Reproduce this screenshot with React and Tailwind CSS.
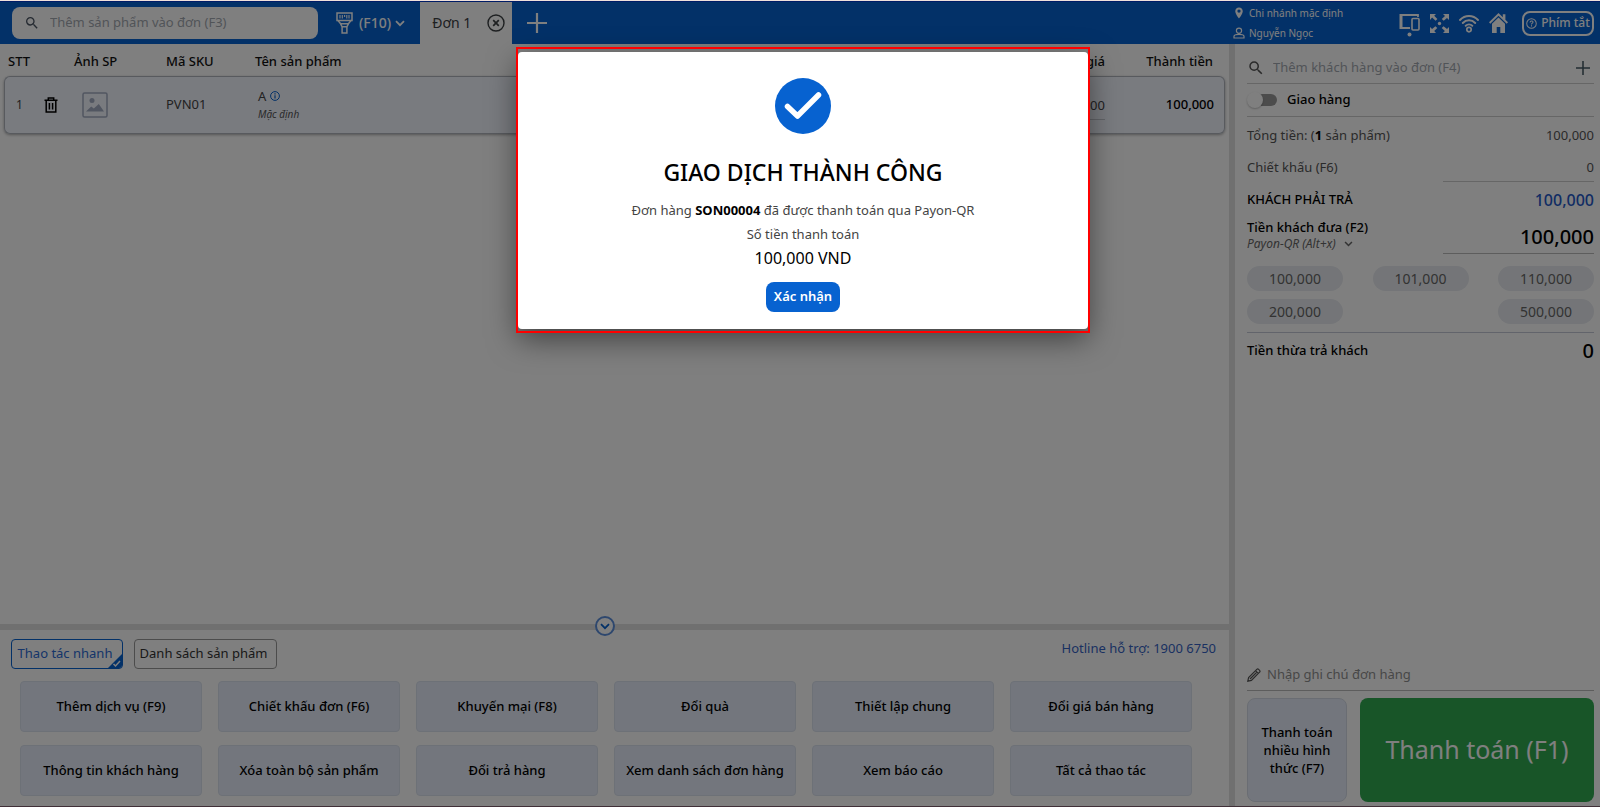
import React from "react";

const quickActions = [
  "Thêm dịch vụ (F9)",
  "Chiết khấu đơn (F6)",
  "Khuyến mại (F8)",
  "Đổi quà",
  "Thiết lập chung",
  "Đổi giá bán hàng",
  "Thông tin khách hàng",
  "Xóa toàn bộ sản phẩm",
  "Đổi trả hàng",
  "Xem danh sách đơn hàng",
  "Xem báo cáo",
  "Tất cả thao tác",
];

const suggestions = ["100,000", "101,000", "110,000", "200,000", null, "500,000"];

function SearchIcon({ className }) {
  return (
    <svg viewBox="0 0 24 24" className={className} fill="currentColor" aria-hidden="true">
      <path d="M15.5 14h-.79l-.28-.27A6.47 6.47 0 0 0 16 9.5 6.5 6.5 0 1 0 9.5 16c1.61 0 3.09-.59 4.23-1.57l.27.28v.79l5 4.99L20.49 19l-4.99-5zm-6 0C7.01 14 5 11.99 5 9.5S7.01 5 9.5 5 14 7.01 14 9.5 11.99 14 9.5 14z" />
    </svg>
  );
}

function ScannerIcon() {
  return (
    <svg viewBox="0 0 17 22" className="h-[22px] w-[17px]" fill="none" stroke="currentColor" strokeWidth="1.5" aria-hidden="true">
      <path d="M1 1h15v7.5H1z" />
      <path d="M4 3v3.5M6.3 3v3.5M8.6 3v2M10.8 3v3.5M13 3v3.5" strokeWidth="1.1" />
      <path d="M2 8.5l2.6 3.3h7.8L15 8.5M4.6 11.8l1.5 3h4.8l1.5-3M6.1 14.8V21h4.8v-6.2" />
    </svg>
  );
}

function ChevronDown({ className }) {
  return (
    <svg viewBox="0 0 10 7" className={className} fill="none" stroke="currentColor" strokeWidth="1.8" aria-hidden="true">
      <path d="M1 1.2l4 4 4-4" />
    </svg>
  );
}

function PlusIcon({ className }) {
  return (
    <svg viewBox="0 0 20 20" className={className} fill="none" stroke="currentColor" strokeWidth="2.2" aria-hidden="true">
      <path d="M10 0v20M0 10h20" />
    </svg>
  );
}

function Header() {
  return (
    <header className="flex h-[42px] shrink-0 items-center bg-[#0762d0] text-white">
      <label className="ml-3 flex h-8 w-[306px] items-center rounded-lg bg-white pl-3">
        <SearchIcon className="size-4 text-[#4b5563]" />
        <input
          aria-label="Thêm sản phẩm vào đơn (F3)"
          placeholder="Thêm sản phẩm vào đơn (F3)"
          className="ml-2.5 w-60 bg-transparent text-[13px] outline-none placeholder:text-[#a3a8b0]"
        />
      </label>
      <button type="button" className="ml-[18px] flex items-center text-sm">
        <ScannerIcon />
        <span className="mr-1 ml-1.5 font-medium">(F10)</span>
        <ChevronDown className="h-[7px] w-2.5" />
      </button>
      <div className="ml-[15px] flex h-full w-[92px] items-center justify-between bg-white pr-[7px] pl-3 text-[#3c4043]">
        <span className="text-sm whitespace-nowrap">Đơn 1</span>
        <button type="button" aria-label="Đóng đơn">
          <svg viewBox="0 0 18 18" className="size-[18px]" fill="none" stroke="currentColor" strokeWidth="1.4" aria-hidden="true">
            <circle cx="9" cy="9" r="8" />
            <path d="M6.2 6.2l5.6 5.6M11.8 6.2l-5.6 5.6" strokeWidth="1.7" />
          </svg>
        </button>
      </div>
      <button type="button" aria-label="Thêm đơn" className="ml-[15px]">
        <PlusIcon className="size-5" />
      </button>

      <div className="ml-auto flex w-[367px] items-center pr-1.5">
        <div className="flex flex-col gap-1 text-[10px] leading-4">
          <div className="flex items-center gap-1">
            <svg viewBox="0 0 24 24" className="size-3" fill="currentColor" aria-hidden="true">
              <path d="M12 1C7.6 1 4.5 4.3 4.5 8.4 4.5 14 12 23 12 23s7.5-9 7.5-14.6C19.5 4.3 16.4 1 12 1zm0 10.5a3.3 3.3 0 1 1 0-6.6 3.3 3.3 0 0 1 0 6.6z" />
            </svg>
            Chi nhánh mặc định
          </div>
          <div className="flex items-center gap-1">
            <svg viewBox="0 0 12 12" className="size-3" fill="none" stroke="currentColor" strokeWidth="1.2" aria-hidden="true">
              <circle cx="6" cy="3.7" r="2.6" />
              <path d="M1 11V9.3C1 8 3 7.4 6 7.4S11 8 11 9.3V11z" />
            </svg>
            Nguyễn Ngọc
          </div>
        </div>
        <div className="ml-auto flex items-center gap-[10px]">
          <svg viewBox="0 0 21 24" className="mt-1 h-6 w-[21px]" fill="none" stroke="currentColor" aria-hidden="true">
            <path d="M19 4V2H2v13h9" strokeWidth="1.8" />
            <path d="M2 1v15" strokeWidth="3" />
            <rect x="13" y="5.5" width="7" height="11.5" rx="1" strokeWidth="1.6" />
            <circle cx="10.5" cy="21.5" r="2" fill="currentColor" stroke="none" />
          </svg>
          <svg viewBox="0 0 19 19" className="size-[19px]" fill="currentColor" aria-hidden="true">
            <path d="M0 0h6L4.2 1.8l3.2 3.1-1.8 1.8-3.5-3.1L0 6zM19 0v6l-2-2.1-3.3 2.9-1.9-1.8 3.2-3.1L13 0zM0 19v-6l2.1 2.1 3.3-2.9 1.9 1.8-3.1 3.1L6 19zM19 19h-6l1.9-1.9-3.2-3.1 1.9-1.8 3.4 2.9L19 13z" />
            <circle cx="9.5" cy="9.5" r="1.7" />
          </svg>
          <svg viewBox="0 0 20 19" className="h-[19px] w-5" fill="none" stroke="currentColor" strokeWidth="1.9" strokeLinecap="round" aria-hidden="true">
            <path d="M1 6c4.9-5.3 13.1-5.3 18 0M3.800 9c3.400-3.600 9-3.600 12.400 0M6.700 11.800c1.900-1.800 4.700-1.800 6.600 0" />
            <circle cx="10" cy="15.6" r="2.2" strokeWidth="1.7" />
          </svg>
          <svg viewBox="0 0 19 20" className="h-5 w-[19px]" fill="currentColor" aria-hidden="true">
            <path d="M9.5 0L0 9.3l1.3 1.4 8.2-7.9 8.2 7.9L19 9.3l-2.6-2.6V1.2h-2.6v3z" />
            <path d="M9.5 4.5L3 10.8V20h4.7v-6h3.6v6H16v-9.2z" />
          </svg>
          <button type="button" className="ml-1 flex h-[25px] w-[72px] items-center justify-center gap-1 rounded-lg border-2 border-white text-xs font-medium whitespace-nowrap">
            <svg viewBox="0 0 12 12" className="size-[11px] shrink-0" fill="none" stroke="currentColor" strokeWidth="1.1" aria-hidden="true">
              <circle cx="6" cy="6" r="5.2" />
              <path d="M4.4 4.8c0-2.2 3.2-2.1 3.2-.2C7.6 5.7 6 5.7 6 7M6 8v1.2" />
            </svg>
            Phím tắt
          </button>
        </div>
      </div>
    </header>
  );
}

function OrderTable() {
  return (
    <div className="min-h-0 grow px-1">
      <table className="w-full table-fixed border-separate border-spacing-0 text-[13px]">
        <thead>
          <tr className="h-8 text-left text-[#111]">
            <th className="w-10 pt-1 pl-1 font-medium">STT</th>
            <td className="w-[30px]" />
            <th className="w-[92px] pt-1 font-medium">Ảnh SP</th>
            <th className="w-[89px] pt-1 font-medium">Mã SKU</th>
            <th className="pt-1 font-medium">Tên sản phẩm</th>
            <th className="w-[110px] pt-1 text-right font-medium">Đơn giá</th>
            <th className="w-[120px] pt-1 pr-3 text-right font-medium">Thành tiền</th>
          </tr>
        </thead>
        <tbody>
          <tr className="h-[58px] rounded-md bg-[#f3f6ff] text-[#444] shadow-[0_1px_3px_rgba(0,0,0,0.35)]">
            <td className="rounded-l-md border-y border-l border-[#b0b5bd] pl-[11px] text-xs">1</td>
            <td className="border-y border-[#b0b5bd]">
              <button type="button" aria-label="Xóa sản phẩm" className="block text-black">
                <svg viewBox="0 0 14 16" className="h-4 w-3.5" fill="none" stroke="currentColor" strokeWidth="1.5" aria-hidden="true">
                  <path d="M.5 3.3h13M4.3 3V1h5.4v2M2.2 3.500V15h9.600V3.500M5.400 6v6.500M8.600 6v6.500" />
                </svg>
              </button>
            </td>
            <td className="border-y border-[#b0b5bd] pl-2">
              <svg viewBox="0 0 26 26" className="size-[26px]" fill="none" aria-hidden="true">
                <rect x="1" y="1" width="24" height="24" rx="1.5" stroke="#a3adc2" strokeWidth="1.5" />
                <circle cx="10" cy="8.5" r="2.5" fill="#a3adc2" />
                <path d="M4 19.5l5.2-5 2.6 2 5-4.5 5.200 7.500z" fill="#a3adc2" />
              </svg>
            </td>
            <td className="border-y border-[#b0b5bd]">PVN01</td>
            <td className="border-y border-[#b0b5bd] pl-[3px]">
              <div className="flex items-center gap-1 leading-[18px]">
                A
                <svg viewBox="0 0 10 10" className="size-2.5" fill="none" stroke="#0762d0" strokeWidth="1" aria-hidden="true">
                  <circle cx="5" cy="5" r="4.4" />
                  <path d="M5 4.3v3.2M5 2.3v1.1" strokeWidth="1.2" />
                </svg>
              </div>
              <div className="text-[10px] leading-[18px] text-[#555] italic">Mặc định</div>
            </td>
            <td className="border-y border-[#b0b5bd] text-right">
              <span className="inline-block border-b border-[#c4c8d0] pl-8 leading-7">100,000</span>
            </td>
            <td className="rounded-r-md border-y border-r border-[#b0b5bd] pr-2.5 text-right font-medium text-black">100,000</td>
          </tr>
        </tbody>
      </table>
    </div>
  );
}

function QuickPanel() {
  return (
    <section className="relative shrink-0 border-t-[6px] border-[#e0e0e0] pb-2.5">
      <button
        type="button"
        aria-label="Thu gọn"
        className="absolute -top-[14px] left-[49.2%] flex size-5 -translate-x-1/2 items-center justify-center rounded-full border-2 border-[#5c8fdc] bg-white text-[#0762d0]"
      >
        <ChevronDown className="h-[7px] w-2.5" />
      </button>
      <div className="flex items-start pt-[9px] pr-[13px] pl-[11px] text-[13px]">
        <button type="button" className="relative h-[30px] w-28 overflow-hidden rounded border border-[#0762d0] pr-1 text-[#2c6bd4]">
          Thao tác nhanh
          <svg viewBox="0 0 14 14" className="absolute right-0 bottom-0 size-3.5" aria-hidden="true">
            <path d="M14 0v14H0z" fill="#0762d0" />
            <path d="M5.5 10l2 2 4.5-5" fill="none" stroke="#fff" strokeWidth="1.5" />
          </svg>
        </button>
        <button type="button" className="ml-[11px] h-[30px] w-[143px] rounded border border-[#999] pr-1 text-[#333]">
          Danh sách sản phẩm
        </button>
        <a href="tel:19006750" className="ml-auto text-[#3563c4]">Hotline hỗ trợ: 1900 6750</a>
      </div>
      <div className="mt-3 grid grid-cols-6 gap-x-4 gap-y-[13px] pr-[37px] pl-5">
        {quickActions.map((label) => (
          <button key={label} type="button" className="h-[51px] rounded border border-[#dbe2ee] bg-[#e6edfb] text-[13px] font-medium text-black">
            {label}
          </button>
        ))}
      </div>
    </section>
  );
}

function Sidebar() {
  return (
    <aside className="flex w-[371px] shrink-0 flex-col border-l-[6px] border-[#e0e0e0] pr-1.5 pb-1 pl-3 text-[13px] text-[#555]">
      <div className="flex h-10 items-center border-b border-[#ccc] pt-2">
        <SearchIcon className="size-[18px] text-[#555]" />
        <input
          aria-label="Thêm khách hàng vào đơn (F4)"
          placeholder="Thêm khách hàng vào đơn (F4)"
          className="ml-2 min-w-0 grow bg-transparent outline-none placeholder:text-[#a3a8b0]"
        />
        <button type="button" aria-label="Thêm khách hàng" className="mr-1 text-[#455a64]">
          <PlusIcon className="size-3.5" />
        </button>
      </div>
      <label className="flex h-[33px] items-center gap-2.5 border-b border-[#ccc] font-medium text-black">
        <input type="checkbox" className="peer sr-only" />
        <span className="flex h-3 w-[30px] items-center rounded-full bg-linear-to-r from-transparent from-30% to-[#999] to-30%">
          <span className="size-4 rounded-full bg-white shadow-[0_1px_2px_rgba(0,0,0,0.25)]" />
        </span>
        Giao hàng
      </label>
      <div className="flex h-[37px] items-center justify-between">
        <span>Tổng tiền: (<b className="text-black">1</b> sản phẩm)</span>
        <span>100,000</span>
      </div>
      <div className="flex h-7 items-stretch justify-between">
        <span className="leading-[26px]">Chiết khấu (F6)</span>
        <span className="w-[151px] border-b border-[#ccc] text-right leading-[26px]">0</span>
      </div>
      <div className="flex h-9 items-center justify-between">
        <span className="font-medium text-black">KHÁCH PHẢI TRẢ</span>
        <span className="text-base font-medium text-[#2459c8]">100,000</span>
      </div>
      <div className="flex h-9 justify-between">
        <div>
          <div className="leading-[18px] font-medium text-black">Tiền khách đưa (F2)</div>
          <button type="button" className="flex items-center text-xs leading-[15px] text-[#666] italic">
            Payon-QR (Alt+x)
            <ChevronDown className="ml-2 h-1.5 w-[9px]" />
          </button>
        </div>
        <span className="w-[151px] border-b border-[#bbb] text-right text-xl leading-[38px] font-medium text-black">100,000</span>
      </div>
      <div className="mt-3 grid grid-cols-[96px_96px_96px] justify-between gap-y-2">
        {suggestions.map((value, i) =>
          value ? (
            <button key={i} type="button" className="h-[25px] rounded-full bg-[#e8ebf0] text-sm text-[#666]">
              {value}
            </button>
          ) : (
            <span key={i} />
          )
        )}
      </div>
      <div className="mt-2 flex h-9 items-center justify-between border-t border-[#c5c9d6] font-medium text-black">
        <span>Tiền thừa trả khách</span>
        <span className="text-xl">0</span>
      </div>
      <label className="mt-auto flex h-8 items-center border-b border-[#bbb]">
        <svg viewBox="0 0 14 14" className="size-3.5" fill="none" stroke="#555" strokeWidth="1.2" aria-hidden="true">
          <path d="M.8 13.2l.8-3.6L9.800 1.400a1.300 1.300 0 0 1 1.800 0l1 1a1.300 1.300 0 0 1 0 1.800L4.400 12.400zM8.500 2.700l2.800 2.800M10 4L3 11" />
        </svg>
        <input
          aria-label="Nhập ghi chú đơn hàng"
          placeholder="Nhập ghi chú đơn hàng"
          className="ml-1.5 min-w-0 grow bg-transparent outline-none placeholder:text-[#8f8f8f]"
        />
      </label>
      <div className="mt-[7px] flex h-[104px] gap-[13px]">
        <button type="button" className="w-[100px] rounded-lg border border-[#d5dbe6] bg-[#e6edfb] px-3 leading-[18px] font-medium text-black">
          Thanh toán nhiều hình thức (F7)
        </button>
        <button type="button" className="grow rounded-lg bg-[#30aa50] text-[25px] text-white">
          Thanh toán (F1)
        </button>
      </div>
    </aside>
  );
}

function SuccessDialog() {
  return (
    <div className="absolute inset-0 flex items-start justify-center bg-black/50 pt-[47px] pl-1.5">
      <div className="relative w-[574px] px-0.5 pt-[5px] pb-1">
        <div role="dialog" aria-labelledby="dialog-title" className="flex h-[277px] flex-col items-center rounded bg-white pt-[26px] text-[13px] text-[#444] shadow-[0_10px_30px_rgba(0,0,0,0.5)]">
          <svg viewBox="0 0 56 56" className="size-14 shrink-0" aria-hidden="true">
            <circle cx="28" cy="28" r="28" fill="#0762d0" />
            <path d="M12.5 28.5L22.5 38L43.5 17" fill="none" stroke="#fff" strokeWidth="5.5" strokeLinecap="round" strokeLinejoin="round" />
          </svg>
          <h2 id="dialog-title" className="mt-[22px] text-[23px] leading-8 font-medium text-black">GIAO DỊCH THÀNH CÔNG</h2>
          <p className="mt-2.5 leading-6">Đơn hàng <b className="text-black">SON00004</b> đã được thanh toán qua Payon-QR</p>
          <p className="leading-6">Số tiền thanh toán</p>
          <p className="text-base leading-6 text-black">100,000 VND</p>
          <button type="button" className="mt-3 h-[30px] w-[74px] rounded-lg bg-[#0762d0] text-[13px] font-semibold text-white">Xác nhận</button>
        </div>
        <div className="pointer-events-none absolute inset-0 border-2 border-[#ff0000]" />
      </div>
    </div>
  );
}

export default function App() {
  return (
    <div className="relative flex min-h-screen flex-col border-b border-[#403038] bg-white font-['Noto_Sans',sans-serif]">
      <div className="relative z-10 h-0.5 shrink-0 border-b border-[#001c66] bg-[#f0e0da]" />
      <Header />
      <div className="flex grow">
        <main className="flex min-w-0 grow flex-col">
          <OrderTable />
          <QuickPanel />
        </main>
        <Sidebar />
      </div>
      <SuccessDialog />
    </div>
  );
}
